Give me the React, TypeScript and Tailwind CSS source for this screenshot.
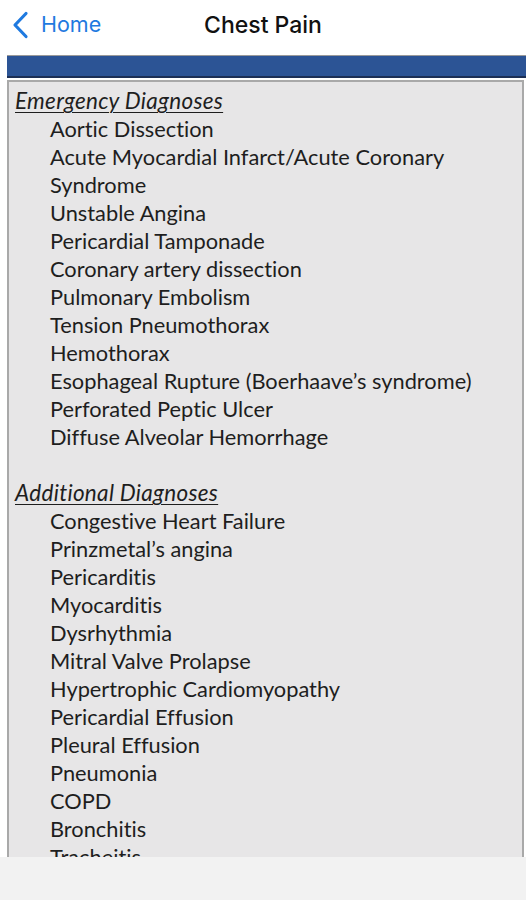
import React from "react";

const emergency = [
  "Aortic Dissection",
  "Acute Myocardial Infarct/Acute Coronary",
  "Syndrome",
  "Unstable Angina",
  "Pericardial Tamponade",
  "Coronary artery dissection",
  "Pulmonary Embolism",
  "Tension Pneumothorax",
  "Hemothorax",
  "Esophageal Rupture (Boerhaave’s syndrome)",
  "Perforated Peptic Ulcer",
  "Diffuse Alveolar Hemorrhage",
];

const additional = [
  "Congestive Heart Failure",
  "Prinzmetal’s angina",
  "Pericarditis",
  "Myocarditis",
  "Dysrhythmia",
  "Mitral Valve Prolapse",
  "Hypertrophic Cardiomyopathy",
  "Pericardial Effusion",
  "Pleural Effusion",
  "Pneumonia",
  "COPD",
  "Bronchitis",
  "Tracheitis",
];

export default function App() {
  return (
    <div className="w-[526px] h-[900px] bg-white flex flex-col overflow-hidden">
      {/* Nav bar */}
      <div className="relative h-[50px] shrink-0 flex items-center">
        <div className="flex items-center pl-[11px] text-[#1f7ae0]">
          <svg width="18" height="28" viewBox="0 0 18 28" fill="none">
            <path d="M15 2.5 L4 14 L15 25.5" stroke="#1f7ae0" strokeWidth="3.2" strokeLinecap="round" strokeLinejoin="round" />
          </svg>
          <span className="ml-[12px] text-[21.5px] leading-none" style={{ fontFamily: "Inter, 'Noto Sans', sans-serif" }}>Home</span>
        </div>
        <div className="absolute left-0 right-0 top-0 h-[50px] flex items-center justify-center pointer-events-none">
          <span className="text-[23px] text-[#111] leading-none font-medium" style={{ fontFamily: "Inter, 'Noto Sans', sans-serif" }}>Chest Pain</span>
        </div>
      </div>

      <div className="h-[5px] shrink-0" />

      {/* Blue bar */}
      <div className="ml-[7px] shrink-0 border-t border-[#9a9a9a] bg-[#2c5495] h-[23px] border-b-2 border-b-[#1c2f55]" />

      {/* Content box */}
      <div className="ml-[7px] mr-[2px] mt-[2px] flex-1 min-h-0 overflow-hidden border-l-2 border-r-2 border-t-2 border-[#a9a9a9] bg-[#e7e6e7]">
        <div className="pt-[5px] text-[#1e1e1e] text-[21.8px] leading-[28px] [font-variant-ligatures:none]" style={{ fontFamily: "Lato, 'Open Sans', sans-serif" }}>
          <div className="pl-[6px] italic underline underline-offset-[3px] decoration-[1px] text-[22.5px] tracking-[0.3px]">Emergency Diagnoses</div>
          {emergency.map((t) => (
            <div key={t} className="pl-[41px] whitespace-nowrap">{t}</div>
          ))}
          <div className="h-[28px]" />
          <div className="pl-[6px] italic underline underline-offset-[3px] decoration-[1px] text-[22.5px] tracking-[0.3px]">Additional Diagnoses</div>
          {additional.map((t) => (
            <div key={t} className="pl-[41px] whitespace-nowrap">{t}</div>
          ))}
        </div>
      </div>

      {/* Bottom bar */}
      <div className="h-[43px] shrink-0 bg-[#f2f2f2]" />
    </div>
  );
}
